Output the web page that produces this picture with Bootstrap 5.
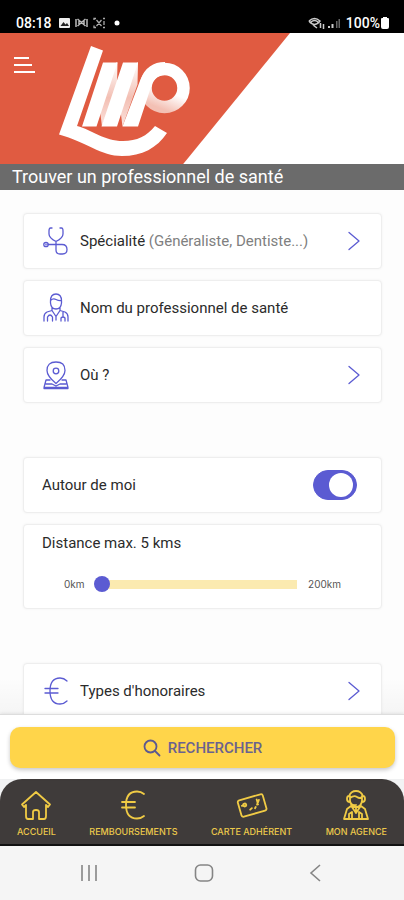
<!DOCTYPE html>
<html lang="fr">
<head>
<meta charset="utf-8">
<meta name="viewport" content="width=device-width, initial-scale=1">
<title>Trouver un professionnel de santé</title>
<link href="https://cdn.jsdelivr.net/npm/bootstrap@5.3.0/dist/css/bootstrap.min.css" rel="stylesheet">
<style>
  :root { --indigo: #5b5bd2; --gold: #ffd54a; --ink: #3f3b3a; }
  body { font-family: Roboto, "Liberation Sans", sans-serif; font-size: 14px; color: #333; background: #fdfdfd; }
  svg { display: block; flex: none; }
  .status { height: 33px; padding: 12px 14px 0 16px; font-size: 14px; line-height: 22px; font-weight: 500; }
  .hero { height: 157px; background: #fff; overflow: hidden; }
  .hero-art { height: 157px; width: 404px; margin-bottom: -157px; }
  .menu-btn { padding: 24px 14px; }
  .page-title { background: #6b6b6b; font-size: 18px; line-height: 26px; padding: 0 12px; }
  .content { padding: 23px 22px 0 23px; background: linear-gradient(#fff0 93%, #00000008); }
  .group { gap: 11px; margin-bottom: 54px; }
  .tile { min-height: 56px; background: #fff; border: 1px solid #eee; border-radius: 4px; box-shadow: 0 0 3px #0000000d; color: #2b2b2b; font-size: 15px; font-weight: 400; }
  .pick { padding: 0 20px 0 17px; gap: 9px; }
  .pick .hint { color: #808080; }
  .pick input { color: #2b2b2b; outline: 0; min-width: 0; height: 30px; line-height: 24px; }
  .pick input::placeholder { color: #2b2b2b; opacity: 1; }
  .line { fill: none; stroke: var(--indigo); stroke-width: 1.3; stroke-linecap: round; stroke-linejoin: round; }
  .plain { padding: 0 24px 0 18px; }
  .form-switch .form-check-input { width: 44px; height: 30px; margin: 0; border-color: var(--indigo); background-color: var(--indigo); background-size: 30px; box-shadow: none;
    background-image: url("data:image/svg+xml,%3csvg xmlns='http://www.w3.org/2000/svg' viewBox='-15 -15 30 30'%3e%3ccircle r='12' fill='%23fff'/%3e%3c/svg%3e"); }
  .range-tile { min-height: 85px; padding: 8px 40px 0 18px; line-height: 20px; }
  .range-row { font-family: Inter, Roboto, sans-serif; font-size: 10px; line-height: 18px; color: #555; margin: 22px 0 0 22px; }
  .dist { height: 18px; min-width: 0; margin: 0 11px 0 5px; }
  .dist::-webkit-slider-runnable-track { height: 9px; border-radius: 0; background: linear-gradient(90deg, transparent 10px, #fbeab0 10px); }
  .dist::-webkit-slider-thumb { margin-top: -4px; background: var(--indigo); box-shadow: none; }
  .action { padding: 12px 9px 11px 10px; background: #fff; border-top: 1px solid #ddd; box-shadow: 0 -1px 3px #00000014; }
  .btn-search { height: 41px; border: 0; border-radius: 10px; background: var(--gold); color: #6a628f; font-size: 15px; line-height: 20px; font-weight: 500; box-shadow: 0 2px 4px #00000038; gap: 7px; }
  .tabs-wrap { background: linear-gradient(#f2f3f4 50%, #111 50%); }
  .tabs { height: 67px; padding: 10px 17px 0; background: var(--ink); border-radius: 22px 22px 0 0; border-bottom: 2px solid #111; }
  .tabs a { font-family: Inter, Roboto, sans-serif; color: #ecc94b; font-size: 9px; line-height: 12px; font-weight: 500; gap: 5px; }
  .tabs svg { fill: none; stroke: #f0cb45; stroke-width: 1.8; stroke-linecap: round; stroke-linejoin: round; }
  .system { height: 54px; background: #f5f5f5; padding: 0 76px 0 73px; }
  .system svg { fill: none; stroke: #858585; stroke-width: 1.6; }
</style>
<script src="https://cdn.jsdelivr.net/npm/bootstrap@5.3.0/dist/js/bootstrap.bundle.min.js"></script>
</head>
<body>
<div class="d-flex flex-column vh-100 overflow-hidden">
  <div class="status bg-black text-white d-flex align-items-start flex-shrink-0">
    <span>08:18</span>
    <svg class="ms-1 mt-1" width="64" height="14" viewBox="0 0 64 14" aria-hidden="true">
      <rect x="3" y="2" width="11" height="10" rx="1" fill="#eee"/><path d="M4.500 10l3-4 2 2.500 1.500-1.500 2 3z" fill="#222"/>
      <path d="M20 3v8M31 3v8M21.500 3l8 7M21.500 10l8-7M23 4v5M28 4v5" stroke="#bbb" stroke-width="1.500" fill="none"/>
      <path d="M38 4V2.500h2M38 9.500V11.500h2M47 2.500h2M47 11.500h2M40.500 4l5 6M40.500 10l5-6M48 5v4" stroke="#aaa" stroke-width="1.300" fill="none"/>
      <circle cx="61" cy="7" r="2.500" fill="#fff"/>
    </svg>
    <svg class="ms-auto mt-1" width="38" height="14" viewBox="0 0 38 14" aria-hidden="true">
      <g fill="none" stroke="#ccc" stroke-width="1.500"><path d="M1 5q5.500-5 11 0Q6.500 12 1 5M3 6q3.500-3 7 0M5 9l4 3M12.500 7v5M15.500 8v5"/></g>
      <path d="M20 12v-2h2v2zM23.500 12V8h2v4z" fill="#ccc"/><path d="M28 12V5h1.500v7zM30.500 12V3H32v9z" fill="#666"/>
    </svg>
    <span>100%</span>
    <svg class="mt-1" width="10" height="14" viewBox="0 0 10 14" aria-hidden="true"><path d="M3 1h4v1h1q1 0 1 1v8q0 2-2 2H3q-2 0-2-2V3q0-1 1-1h1z" fill="#fff"/></svg>
  </div>

  <header class="hero d-flex flex-column flex-shrink-0">
    <svg class="hero-art" viewBox="0 33 404 157" aria-hidden="true">
      <defs>
        <linearGradient id="fold" x1="0" y1="0" x2="0" y2="1"><stop offset="0" stop-color="#fff"/><stop offset=".55" stop-color="#f3bfb3"/><stop offset="1" stop-color="#fbe3de"/></linearGradient>
        <linearGradient id="ring" x1=".7" y1="0" x2=".3" y2="1"><stop offset=".55" stop-color="#fff"/><stop offset="1" stop-color="#f3c0b4"/></linearGradient>
      </defs>
      <path d="M0 33h290L162 190H0z" fill="#e05b41"/>
      <path d="M91 46l12 4.500L77 126C92 130 104 141 123 141C137 141 147 136 155 126L167 133C157 148 142 156 122 156C101 156 86 142 59 134.500z" fill="#fff"/>
      <path d="M116 62.500h1.500l-.5 22-15 42-2-16zM137 62.500h1l-.5 22-15 42-2-16z" fill="url(#fold)"/>
      <circle cx="164.500" cy="88" r="19" fill="none" stroke="url(#ring)" stroke-width="12.500"/>
      <path d="M103 62.500h14.500L96.500 126.500H82zM123 62.500h15L117 126.500H101.500zM122.500 126.500l18-47Q147 62 165 62V75Q154 75 151 87L138 126.500z" fill="#fff"/>
    </svg>
    <div>
      <button type="button" class="menu-btn btn border-0 rounded-0" aria-label="Menu">
        <svg width="22" height="17" viewBox="0 0 22 17" fill="none" stroke="#fff" stroke-width="2"><path d="M0 1h15M0 8h18M0 15h21"/></svg>
      </button>
    </div>
    <h1 class="page-title text-white fw-normal mt-auto mb-0 position-relative">Trouver un professionnel de santé</h1>
  </header>

  <main class="content flex-fill overflow-hidden">
    <div class="group d-flex flex-column">
      <button type="button" class="tile pick d-flex align-items-center text-start">
        <svg class="line" width="30" height="30" viewBox="0 0 30 30"><path d="M11 2H9.500Q8 2 8 5V8Q8 12 15 15.500Q22 12 22 8V5Q22 2 20.500 2H19M15 15.500V24Q15 28 19 28H21.500Q26 28 26 23.500Q26 18.500 21 18.500H7"/><circle cx="5" cy="18.500" r="2.200"/><path d="M5 18v1"/></svg>
        <span class="flex-fill">Spécialité <span class="hint">(Généraliste, Dentiste...)</span></span>
        <svg class="line" width="14" height="20" viewBox="0 0 14 20"><path d="M2 1.500L12 10L2 18.500"/></svg>
      </button>
      <label class="tile pick d-flex align-items-center" for="nom">
        <svg class="line" width="30" height="30" viewBox="0 0 30 30"><path d="M9.500 8Q9.500 1 15 1T20.500 8V10Q20 16 15 16T9.500 10zM9.500 7.500Q12 5 15 6.500T20.500 7.500M11 14.500v3L6 19Q3 20.500 3 24V28M19 14.500v3L24 19Q27 20.500 27 24V28M11 17.500l4 6 4-6M6.500 28v-4q2.500-4 5 0v4M15 23.500V27M22 19v5M20 28v-3q2-2 4 0v3"/></svg>
        <input id="nom" type="text" class="flex-fill border-0 p-0 bg-transparent" placeholder="Nom du professionnel de santé" aria-label="Nom du professionnel de santé">
      </label>
      <button type="button" class="tile pick d-flex align-items-center text-start">
        <svg class="line" width="30" height="30" viewBox="0 0 30 30"><path d="M15 23.500Q6 16 6 10.500Q6 2 15 2T24 10.500Q24 16 15 23.500z"/><circle cx="15" cy="11" r="2.800"/><path d="M9 20H5L3 27.500H27L25 20H21M5 24h6l4 2 4-2h6M3 28.500h24"/></svg>
        <span class="flex-fill">Où ?</span>
        <svg class="line" width="14" height="20" viewBox="0 0 14 20"><path d="M2 1.500L12 10L2 18.500"/></svg>
      </button>
    </div>

    <div class="group d-flex flex-column">
      <div class="tile plain d-flex align-items-center justify-content-between">
        <label for="autour">Autour de moi</label>
        <div class="form-check form-switch p-0 m-0 d-flex"><input class="form-check-input" type="checkbox" role="switch" id="autour" checked></div>
      </div>
      <div class="tile range-tile">
        <label for="distance">Distance max. 5 kms</label>
        <div class="range-row d-flex align-items-center">
          <span>0km</span>
          <input type="range" class="form-range dist flex-fill" id="distance" min="0" max="200" value="5">
          <span>200km</span>
        </div>
      </div>
    </div>

    <button type="button" class="tile pick d-flex align-items-center text-start w-100">
      <svg class="line" width="30" height="30" viewBox="0 0 30 30"><path d="M26 5Q23 2 19 2Q9 2 9 15T19 28Q23 28 26 25M4 12.500H17M4 17H17"/></svg>
      <span class="flex-fill">Types d'honoraires</span>
      <svg class="line" width="14" height="20" viewBox="0 0 14 20"><path d="M2 1.500L12 10L2 18.500"/></svg>
    </button>
  </main>

  <div class="action flex-shrink-0 position-relative">
    <button type="button" class="btn btn-search w-100 p-0 d-flex align-items-center justify-content-center">
      <svg width="18" height="18" viewBox="0 0 18 18" fill="none" stroke="#5c5890" stroke-width="1.800" stroke-linecap="round"><circle cx="7.500" cy="7.500" r="6"/><path d="M12 12l4.500 4.500"/></svg>
      RECHERCHER
    </button>
  </div>

  <div class="tabs-wrap flex-shrink-0">
    <nav class="tabs d-flex justify-content-between">
      <a href="#" class="d-flex flex-column align-items-center text-decoration-none"><svg width="32" height="32" viewBox="0 0 32 32"><path d="M16 3L2 15.500L4 18L6 16V27Q6 30 8 30H13V23Q13 21 16 21T19 23V30H24Q26 30 26 27V16L28 18L30 15.500z"/></svg>ACCUEIL</a>
      <a href="#" class="d-flex flex-column align-items-center text-decoration-none"><svg width="32" height="32" viewBox="0 0 32 32"><path d="M27 5Q24 2.500 20 2.500Q9 2.500 9 16T20 29.500Q24 29.500 27 27M5 13H18M5 18.500H18"/></svg>REMBOURSEMENTS</a>
      <a href="#" class="d-flex flex-column align-items-center text-decoration-none"><svg width="32" height="32" viewBox="0 0 32 32"><g transform="rotate(-16 16 16)"><rect x="3" y="8" width="26" height="17" rx="2"/><circle cx="9" cy="14" r="1.500"/><path d="M6 14h2M22 12v5M24 13l-3 4M13 20l2-1M18 20l1-1"/></g></svg>CARTE ADHÉRENT</a>
      <a href="#" class="d-flex flex-column align-items-center text-decoration-none"><svg width="32" height="32" viewBox="0 0 32 32"><path d="M10 13Q7 13 7 10T9 7Q11 2 16 2T23 7Q25 7 25 10T22 13M10 7V12Q11 18 16 18T22 12V7M10 9Q14 6 17 8T22 8M10 13Q12 17 16 16M11 17L7 20L4 30H28L25 20L21 17M12 18l4 6 4-6M9 29v-4l3-2v6M22 29v-4l-3-2v6M16 18v6"/></svg>MON AGENCE</a>
    </nav>
  </div>

  <div class="system flex-shrink-0 d-flex align-items-center justify-content-between">
    <button type="button" class="btn border-0 p-0" aria-label="Récents"><svg width="32" height="20" viewBox="0 0 32 20"><path d="M9 2v16M16 2v16M23 2v16"/></svg></button>
    <button type="button" class="btn border-0 p-0" aria-label="Accueil du téléphone"><svg width="20" height="20" viewBox="0 0 20 20"><rect x="1.500" y="2" width="17" height="16" rx="5"/></svg></button>
    <button type="button" class="btn border-0 p-0" aria-label="Retour"><svg width="26" height="20" viewBox="0 0 26 20"><path d="M18 2L9 10L18 18"/></svg></button>
  </div>
</div>
</body>
</html>
